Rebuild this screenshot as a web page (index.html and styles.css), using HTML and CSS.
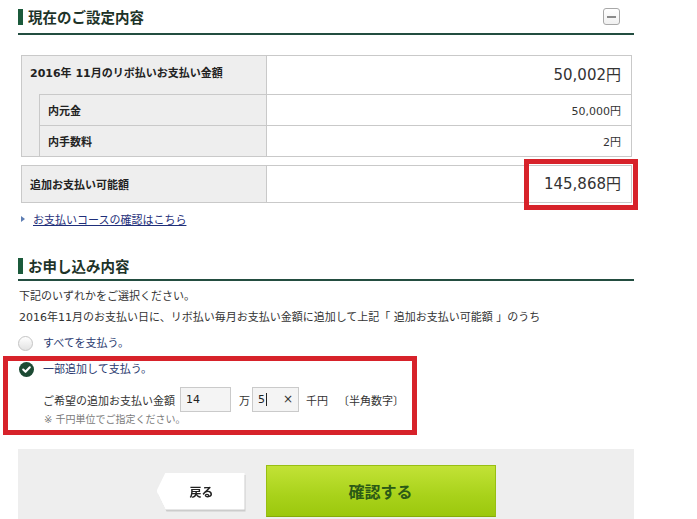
FILE: index.html
```html
<!DOCTYPE html>
<html lang="ja">
<head>
<meta charset="utf-8">
<title>お支払い設定</title>
<link rel="stylesheet" href="styles.css">
</head>
<body>
<div class="page">
  <div class="head head1">
    <h2>現在のご設定内容</h2>
    <span class="toggle"><span class="toggle-bar"></span></span>
  </div>

  <table class="summary">
    <tr class="row-main">
      <th colspan="2">2016年 11月のリボ払いお支払い金額</th>
      <td class="val big">50,002円</td>
    </tr>
    <tr class="row-sub">
      <td class="indent" rowspan="2"></td>
      <th>内元金</th>
      <td class="val">50,000円</td>
    </tr>
    <tr class="row-sub">
      <th>内手数料</th>
      <td class="val">2円</td>
    </tr>
  </table>

  <div class="avail-wrap">
    <table class="summary avail">
      <tr>
        <th>追加お支払い可能額</th>
        <td class="val big">145,868円</td>
      </tr>
    </table>
    <span class="highlight"></span>
  </div>

  <div class="link-row"><span class="tri"></span><a href="#" class="course-link">お支払いコースの確認はこちら</a></div>

  <div class="head head2">
    <h2>お申し込み内容</h2>
  </div>

  <p class="lead">下記のいずれかをご選択ください。</p>
  <p class="lead">2016年11月のお支払い日に、リボ払い毎月お支払い金額に追加して上記「 追加お支払い可能額 」のうち</p>

  <label class="radio-row first">
    <span class="radio"></span>
    <span class="radio-label">すべてを支払う。</span>
  </label>

  <div class="selected-box">
    <label class="radio-row">
      <svg class="radio-on" width="15" height="15" viewBox="0 0 15 15"><circle cx="7.5" cy="7.5" r="7.5" fill="#1c4a33"/><path d="M4.2 7.6 L6.5 9.8 L10.8 5.3" fill="none" stroke="#fff" stroke-width="2.1" stroke-linecap="round" stroke-linejoin="round"/></svg>
      <span class="radio-label">一部追加して支払う。</span>
    </label>
    <div class="amount-row">
      <span class="amount-label">ご希望の追加お支払い金額</span>
      <span class="field f1">14</span>
      <span class="unit">万</span>
      <span class="field f2">5<span class="caret"></span><span class="clear">×</span></span>
      <span class="unit sen">千円</span>
      <span class="hint">〔半角数字〕</span>
    </div>
    <div class="note">※ 千円単位でご指定ください。</div>
  </div>

  <div class="actions">
    <div class="back-wrap"><a href="#" class="back">戻る</a></div>
    <a href="#" class="confirm">確認する</a>
  </div>
</div>
</body>
</html>
```
FILE: styles.css
```css
body {
  margin: 0;
  font-family: "DejaVu Sans", "Noto Sans CJK JP", sans-serif;
  font-size: 11px;
  color: #333;
  background: #fff;
}

.page {
  width: 616px;
  margin-left: 18px;
}

.head {
  display: flex;
  align-items: center;
  justify-content: space-between;
  border-bottom: 2px solid #234d40;
}

.head1 {
  padding: 8px 14px 8px 0;
}

.head2 {
  margin-top: 32px;
  padding-bottom: 5px;
}

.head h2 {
  margin: 0;
  font-family: "Noto Sans CJK JP", sans-serif;
  font-size: 14.5px;
  font-weight: bold;
  line-height: 16px;
  border-left: 5px solid #1b5a3b;
  padding-left: 5px;
  color: #1d3328;
}

.toggle {
  width: 15px;
  height: 15px;
  border: 1px solid #a8a8a8;
  border-radius: 3px;
  background: linear-gradient(#ffffff, #f0f0f0);
  display: flex;
  align-items: center;
  justify-content: center;
}

.toggle-bar {
  width: 9px;
  height: 2px;
  background: #8a8a8a;
}

.summary {
  border-collapse: collapse;
  width: 611px;
  margin: 20px 2px 0 3px;
}

.summary th,
.summary td {
  border: 1px solid #c9c9c9;
  padding: 0;
}

.summary th {
  background: #eeeeee;
  text-align: left;
  font-weight: bold;
  font-size: 11px;
  color: #222;
  width: 244px;
}

.row-main th {
  height: 32px;
  padding-left: 8px;
  padding-bottom: 6px;
}

.row-main td {
  height: 38px;
}

.row-main th[colspan] {
  width: 236px;
}

.row-sub th {
  height: 30px;
  padding-left: 8px;
  width: 218px;
}

.summary td.indent {
  background: #eeeeee;
  width: 17px;
  border-top-style: hidden;
}

.summary td.val {
  text-align: right;
  padding-right: 10px;
  font-size: 11px;
  color: #333;
}

.summary td.big {
  font-size: 15px;
  line-height: 18px;
}

.avail-wrap {
  position: relative;
}

.summary.avail {
  margin-top: 8px;
}

.avail th {
  height: 36px;
  padding-left: 8px;
  width: 236px;
}

.highlight {
  position: absolute;
  left: 506px;
  top: -6px;
  width: 114px;
  height: 51px;
  box-sizing: border-box;
  border: 5px solid #d7222a;
}

.link-row {
  display: flex;
  align-items: center;
  margin-top: 9px;
  padding-left: 3px;
  line-height: 14px;
}

.tri {
  width: 0;
  height: 0;
  border-left: 4px solid #5d7db3;
  border-top: 3px solid transparent;
  border-bottom: 3px solid transparent;
  margin-right: 8px;
}

.course-link {
  color: #1f2f7a;
  text-decoration: underline;
  font-family: "Noto Sans CJK JP", sans-serif;
  font-size: 11px;
}

.lead {
  margin: 0;
  line-height: 21px;
  font-size: 11px;
  padding-left: 1px;
}

.lead:first-of-type {
  margin-top: 5px;
}

.radio-row {
  display: flex;
  align-items: center;
  height: 15px;
  line-height: 15px;
}

.radio-row.first {
  margin-top: 8px;
}

.radio {
  width: 13px;
  height: 13px;
  border-radius: 50%;
  border: 1px solid #c4c4c4;
  background: linear-gradient(#ffffff, #e2e2e2);
}

.radio-on {
  display: block;
}

.radio-label {
  margin-left: 10px;
  color: #2a3a70;
  font-size: 11px;
}

.selected-box {
  margin-top: 5px;
  margin-left: -15px;
  width: 414px;
  box-sizing: border-box;
  border: 5px solid #d7222a;
  padding: 1px 0 4px 11px;
}

.selected-box .radio-label {
  margin-left: 9px;
}

.amount-row {
  display: flex;
  align-items: center;
  margin-top: 10px;
  margin-left: 24px;
  height: 25px;
}

.amount-label {
  margin-right: 5px;
}

.field {
  position: relative;
  box-sizing: border-box;
  height: 25px;
  border: 1px solid #cacaca;
  background: #f4f4f4;
  display: flex;
  align-items: center;
  padding-left: 5px;
  font-size: 11px;
  color: #222;
}

.f1 {
  width: 51px;
}

.f2 {
  width: 47px;
  margin-left: 2px;
}

.caret {
  width: 1px;
  height: 13px;
  background: #222;
  margin-left: 1px;
}

.clear {
  position: absolute;
  right: 5px;
  top: 4px;
  font-size: 12px;
  line-height: 15px;
  color: #333;
}

.unit {
  margin-left: 8px;
}

.unit.sen {
  margin-left: 7px;
}

.hint {
  margin-left: 10px;
}

.note {
  margin-top: 2px;
  margin-left: 25px;
  font-size: 10px;
  line-height: 12px;
  color: #7a7a7a;
}

.actions {
  margin-top: 14px;
  background: #eeeeee;
  padding: 16px 0 20px;
  display: flex;
  justify-content: center;
  align-items: center;
  gap: 21px;
}

.back-wrap {
  filter: drop-shadow(1px 2px 0 rgba(0, 0, 0, 0.14));
}

.back {
  width: 88px;
  height: 37px;
  background: #fff;
  clip-path: polygon(9px 0, 100% 0, 100% 100%, 9px 100%, 0 50%);
  display: flex;
  align-items: center;
  justify-content: center;
  padding-left: 2px;
  box-sizing: border-box;
  color: #222;
  text-decoration: none;
  font-family: "Noto Sans CJK JP", sans-serif;
  font-size: 12px;
  font-weight: bold;
}

.confirm {
  width: 230px;
  height: 52px;
  box-sizing: border-box;
  border: 1px solid #98bf12;
  border-bottom-color: #86ab08;
  background: linear-gradient(#c2e236, #a8d21a 60%, #9cc80d);
  display: flex;
  align-items: center;
  justify-content: center;
  color: #2b5a16;
  text-decoration: none;
  font-family: "Noto Sans CJK JP", sans-serif;
  font-size: 16px;
  font-weight: bold;
}
```
